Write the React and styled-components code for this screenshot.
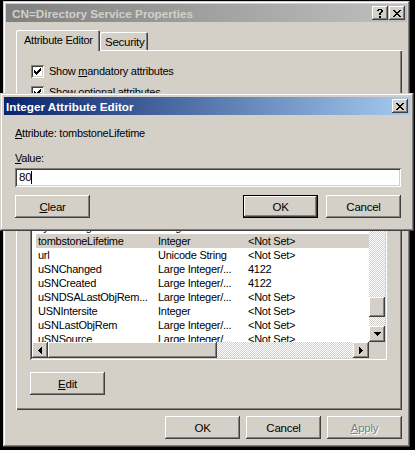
import React from 'react';
import styled, { createGlobalStyle, css } from 'styled-components';

const FACE = '#d4d0c8';

const GlobalStyle = createGlobalStyle`
  html, body {
    margin: 0;
    padding: 0;
    background: #000;
  }
  body {
    width: 415px;
    height: 450px;
    overflow: hidden;
    font-family: 'Liberation Sans', Arial, sans-serif;
    font-size: 11px;
    letter-spacing: -0.25px;
    color: #000;
  }
`;

const raised = css`
  box-shadow: inset -1px -1px #404040, inset 1px 1px #fff, inset -2px -2px #808080, inset 2px 2px ${FACE};
`;

const sunken = css`
  box-shadow: inset 1px 1px #808080, inset -1px -1px #fff, inset 2px 2px #404040, inset -2px -2px ${FACE};
`;

const frame = css`
  box-shadow: inset -1px -1px #404040, inset 1px 1px ${FACE}, inset -2px -2px #808080, inset 2px 2px #fff;
`;

const dither = css`
  background: repeating-conic-gradient(#fff 0 25%, ${FACE} 0 50%) 0 0 / 2px 2px;
`;

const Desktop = styled.div`
  position: relative;
  width: 415px;
  height: 450px;
  overflow: hidden;
`;

const Window = styled.div`
  box-sizing: border-box;
  width: 407px;
  height: 446px;
  margin: 1px 0 0 3px;
  padding: 3px;
  background: ${FACE};
  ${frame};
  display: flex;
  flex-direction: column;
`;

const Dialog = styled.div`
  position: absolute;
  left: 0;
  top: 93px;
  box-sizing: border-box;
  width: 414px;
  height: 138px;
  padding: 4px;
  background: ${FACE};
  ${frame};
  display: flex;
  flex-direction: column;
`;

const TitleBar = styled.div`
  height: 18px;
  flex: none;
  display: flex;
  align-items: center;
  justify-content: space-between;
  padding: 0 2px 0 ${(p) => p.$indent || 6}px;
  background: linear-gradient(to right, ${(p) => (p.$active ? '#0a246a' : '#808080')}, ${(p) => (p.$active ? '#a6caf0' : '#c0c0c0')});
  color: ${(p) => (p.$active ? '#fff' : FACE)};
  font-weight: bold;
  font-size: 11.7px;
  letter-spacing: 0;
  white-space: nowrap;
`;

const CaptionButtons = styled.div`
  display: flex;
  gap: 1px;
`;

const CaptionButton = styled.div`
  width: 16px;
  height: 14px;
  background: ${FACE};
  ${raised};
  display: flex;
  align-items: center;
  justify-content: center;
`;

const Glyph = ({ rows, color = '#000' }) => {
  const w = rows[0].length;
  const h = rows.length;
  return (
    <svg width={w} height={h} viewBox={`0 0 ${w} ${h}`} shapeRendering="crispEdges" style={{ display: 'block' }}>
      {rows.flatMap((r, y) =>
        [...r].map((c, x) => (c === 'X' ? <rect key={`${x}-${y}`} x={x} y={y} width="1" height="1" fill={color} /> : null))
      )}
    </svg>
  );
};

const CLOSE = ['XX....XX', '.XX..XX.', '..XXXX..', '...XX...', '..XXXX..', '.XX..XX.', 'XX....XX'];
const HELP = ['.XXXX.', 'XX..XX', '....XX', '...XX.', '..XX..', '..XX..', '......', '..XX..', '..XX..'];
const CHECK = ['......X', '.....XX', 'X...XXX', 'XX.XXX.', 'XXXXX..', '.XXX...', '..X....'];
const ARROW_DOWN = ['XXXXXXX', '.XXXXX.', '..XXX..', '...X...'];
const ARROW_UP = ['...X...', '..XXX..', '.XXXXX.', 'XXXXXXX'];
const ARROW_LEFT = ['...X', '..XX', '.XXX', 'XXXX', '.XXX', '..XX', '...X'];
const ARROW_RIGHT = ['X...', 'XX..', 'XXX.', 'XXXX', 'XXX.', 'XX..', 'X...'];

const Body = styled.div`
  flex: 1;
  display: flex;
  flex-direction: column;
  padding: 8px 5px 0 10px;
`;

const TabStrip = styled.div`
  height: 20px;
  display: flex;
  align-items: flex-end;
  position: relative;
  z-index: 1;
`;

const Tab = styled.div`
  box-sizing: border-box;
  width: ${(p) => p.$width}px;
  height: ${(p) => (p.$selected ? 21 : 18)}px;
  margin-bottom: ${(p) => (p.$selected ? -1 : 0)}px;
  padding: ${(p) => (p.$selected ? '3px 0 0 8px' : '3px 0 0 5px')};
  background: ${FACE};
  border-radius: 2px 2px 0 0;
  box-shadow: inset 1px 1px #fff, inset -1px 0 #404040, inset -2px 0 #808080;
  line-height: 14px;
  font-size: ${(p) => (p.$selected ? 11 : 11.5)}px;
`;

const Panel = styled.div`
  box-sizing: border-box;
  height: 360px;
  padding: 15px 14px 0 14px;
  box-shadow: inset 1px 1px #fff, inset -1px -1px #404040, inset -2px -2px #808080;
  display: flex;
  flex-direction: column;
  align-items: flex-start;
`;

const CheckRow = styled.label`
  display: flex;
  align-items: center;
  gap: 5px;
  height: 13px;
  margin: 0 0 8px 1px;
  line-height: 13px;
`;

const CheckBox = styled.span`
  box-sizing: border-box;
  width: 13px;
  height: 13px;
  padding: 3px;
  background: #fff;
  ${sunken};
`;

const Mn = styled.span`
  text-decoration: underline;
  text-underline-offset: 1px;
`;

const Label = styled.div`
  height: 14px;
  line-height: 14px;
`;

const List = styled.div`
  box-sizing: border-box;
  width: 357px;
  height: 218px;
  padding: 2px;
  background: #fff;
  ${sunken};
  display: grid;
  grid-template-columns: 1fr 16px;
  grid-template-rows: 1fr 16px;
`;

const ListContent = styled.div`
  overflow: hidden;
  display: flex;
  flex-direction: column;
`;

const HeaderRow = styled.div`
  display: grid;
  grid-template-columns: 124px 90px 1fr;
  height: 20px;
  flex: none;
`;

const HeaderCell = styled.div`
  background: ${FACE};
  ${raised};
  padding: 3px 6px;
  line-height: 14px;
`;

const Row = styled.div`
  display: grid;
  grid-template-columns: 120px 90px 1fr;
  height: 14px;
  flex: none;
  margin-left: 4px;
  line-height: 14px;
  background: ${(p) => (p.$selected ? FACE : 'transparent')};
  white-space: nowrap;
`;

const Cell = styled.div`
  padding-left: 2px;
  overflow: hidden;
`;

const VScroll = styled.div`
  display: flex;
  flex-direction: column;
`;

const HScroll = styled.div`
  display: flex;
`;

const ScrollButton = styled.div`
  width: 16px;
  height: 16px;
  flex: none;
  box-sizing: border-box;
  background: ${FACE};
  ${raised};
  display: flex;
  align-items: center;
  justify-content: center;
`;

const Thumb = styled.div`
  flex: none;
  width: ${(p) => (p.$vertical ? '16px' : `${p.$size}px`)};
  height: ${(p) => (p.$vertical ? `${p.$size}px` : '16px')};
  background: ${FACE};
  ${raised};
`;

const Track = styled.div`
  flex: ${(p) => (p.$size ? 'none' : 1)};
  ${(p) => (p.$size ? `height: ${p.$size}px;` : '')}
  ${dither};
`;

const Corner = styled.div`
  background: ${FACE};
`;

const Button = styled.div`
  box-sizing: border-box;
  width: 75px;
  height: 23px;
  flex: none;
  background: ${FACE};
  ${(p) =>
    p.$default
      ? css`
          box-shadow: inset 0 0 0 1px #000, inset -2px -2px #404040, inset 2px 2px #fff, inset -3px -3px #808080;
        `
      : raised};
  display: flex;
  align-items: center;
  justify-content: center;
  font-size: 11.5px;
  color: ${(p) => (p.$disabled ? '#808080' : '#000')};
  text-shadow: ${(p) => (p.$disabled ? '1px 1px #fff' : 'none')};
`;

const EditButton = styled(Button)`
  margin-top: 12px;
`;

const ButtonRow = styled.div`
  display: flex;
  justify-content: ${(p) => p.$justify || 'flex-end'};
  gap: ${(p) => p.$gap || 6}px;
  margin-top: ${(p) => p.$top || 0}px;
`;

const DialogBody = styled.div`
  flex: 1;
  display: flex;
  flex-direction: column;
  padding: 11px 9px 0 11px;
`;

const DialogLabel = styled.div`
  height: 14px;
  line-height: 14px;
  margin-bottom: ${(p) => p.$gap || 0}px;
`;

const Input = styled.div`
  box-sizing: border-box;
  height: 19px;
  margin-top: 3px;
  padding: 3px 4px 0 4px;
  background: #fff;
  ${sunken};
  display: flex;
  align-items: flex-start;
  line-height: 13px;
  font-size: 11.5px;
`;

const Caret = styled.span`
  width: 1px;
  height: 13px;
  background: #000;
`;

const Spacer = styled.div`
  flex: 1;
`;

const rows = [
  ['showInAdvancedViewOnly', 'Boolean', 'TRUE'],
  ['sPNMappings', 'Unicode String', '<Not Set>'],
  ['subRefs', 'Distinguished...', '<Not Set>'],
  ['subSchemaSubEntry', 'Distinguished...', '<Not Set>'],
  ['systemFlags', 'Integer', '<Not Set>'],
  ['tombstoneLifetime', 'Integer', '<Not Set>'],
  ['url', 'Unicode String', '<Not Set>'],
  ['uSNChanged', 'Large Integer/...', '4122'],
  ['uSNCreated', 'Large Integer/...', '4122'],
  ['uSNDSALastObjRem...', 'Large Integer/...', '<Not Set>'],
  ['USNIntersite', 'Integer', '<Not Set>'],
  ['uSNLastObjRem', 'Large Integer/...', '<Not Set>'],
  ['uSNSource', 'Large Integer/...', '<Not Set>'],
  ['wWWHomePage', 'Unicode String', '<Not Set>'],
];

export default function App() {
  return (
    <Desktop>
      <GlobalStyle />
      <Window>
        <TitleBar>
          <span>CN=Directory Service Properties</span>
          <CaptionButtons>
            <CaptionButton>
              <Glyph rows={HELP} />
            </CaptionButton>
            <CaptionButton>
              <Glyph rows={CLOSE} />
            </CaptionButton>
          </CaptionButtons>
        </TitleBar>
        <Body>
          <TabStrip>
            <Tab $selected $width={84}>Attribute Editor</Tab>
            <Tab $width={48}>Security</Tab>
          </TabStrip>
          <Panel>
            <CheckRow>
              <CheckBox>
                <Glyph rows={CHECK} />
              </CheckBox>
              <span>
                Show <Mn>m</Mn>andatory attributes
              </span>
            </CheckRow>
            <CheckRow>
              <CheckBox>
                <Glyph rows={CHECK} />
              </CheckBox>
              <span>
                Show <Mn>o</Mn>ptional attributes
              </span>
            </CheckRow>
            <CheckRow>
              <CheckBox />
              <span>
                Show only attributes that have <Mn>v</Mn>alues
              </span>
            </CheckRow>
            <Label>
              Attri<Mn>b</Mn>utes:
            </Label>
            <List>
              <ListContent>
                <HeaderRow>
                  <HeaderCell>Attribute</HeaderCell>
                  <HeaderCell>Syntax</HeaderCell>
                  <HeaderCell>Value</HeaderCell>
                </HeaderRow>
                {rows.map(([name, syntax, value]) => (
                  <Row key={name} $selected={name === 'tombstoneLifetime'}>
                    <Cell>{name}</Cell>
                    <Cell>{syntax}</Cell>
                    <Cell>{value}</Cell>
                  </Row>
                ))}
              </ListContent>
              <VScroll>
                <ScrollButton>
                  <Glyph rows={ARROW_UP} />
                </ScrollButton>
                <Track />
                <Thumb $vertical $size={20} />
                <Track $size={9} />
                <ScrollButton>
                  <Glyph rows={ARROW_DOWN} />
                </ScrollButton>
              </VScroll>
              <HScroll>
                <ScrollButton>
                  <Glyph rows={ARROW_LEFT} />
                </ScrollButton>
                <Thumb $size={169} />
                <Track />
                <ScrollButton>
                  <Glyph rows={ARROW_RIGHT} />
                </ScrollButton>
              </HScroll>
              <Corner />
            </List>
            <EditButton>
              <Mn>E</Mn>dit
            </EditButton>
          </Panel>
          <ButtonRow $top={6}>
            <Button>OK</Button>
            <Button>Cancel</Button>
            <Button $disabled>
              <Mn>A</Mn>pply
            </Button>
          </ButtonRow>
        </Body>
      </Window>

      <Dialog>
        <TitleBar $active $indent={2}>
          <span>Integer Attribute Editor</span>
          <CaptionButton>
            <Glyph rows={CLOSE} />
          </CaptionButton>
        </TitleBar>
        <DialogBody>
          <DialogLabel $gap={11}>
            <Mn>A</Mn>ttribute: tombstoneLifetime
          </DialogLabel>
          <DialogLabel>
            <Mn>V</Mn>alue:
          </DialogLabel>
          <Input>
            <span>80</span>
            <Caret />
          </Input>
          <ButtonRow $top={8} $gap={8}>
            <Button>
              <Mn>C</Mn>lear
            </Button>
            <Spacer />
            <Button $default>OK</Button>
            <Button>Cancel</Button>
          </ButtonRow>
        </DialogBody>
      </Dialog>
    </Desktop>
  );
}
